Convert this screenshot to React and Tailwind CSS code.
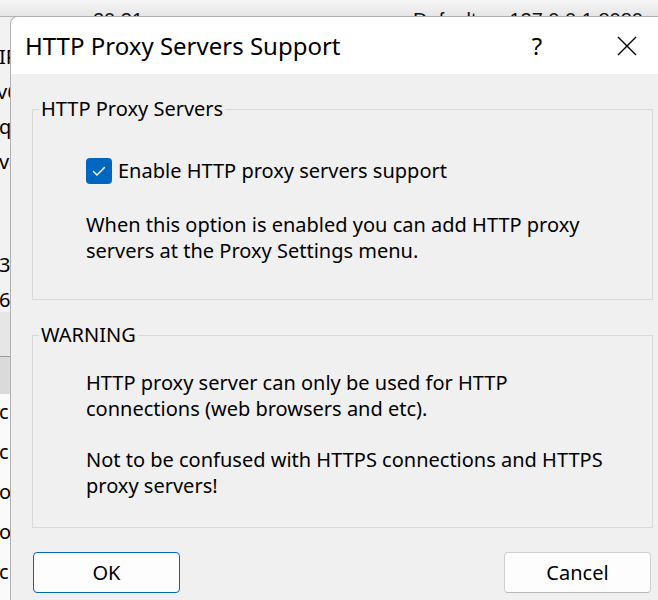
export default function App() {
  return (
    <div className="relative w-[658px] h-[600px] overflow-hidden bg-[#ececec] font-['Noto_Sans',sans-serif] text-black">
      {/* background application window */}
      <div className="absolute inset-0 flex flex-col">
        <div className="h-[17px] shrink-0 bg-gradient-to-b from-[#f6f6f6] to-[#e6e6e6] border-b border-[#b4b4b4] overflow-hidden flex items-start font-['Liberation_Sans',sans-serif] text-[20px] leading-[23px] text-[#111]">
          <span className="ml-[93px] mt-[9px]">20:31</span>
          <span className="ml-[270px] mt-[9px]">Default</span>
          <span className="ml-[33px] mt-[9px] whitespace-nowrap">127.0.0.1:8080</span>
        </div>
        <div className="w-[10px] flex-1 overflow-hidden flex flex-col text-[20px] leading-[24px] whitespace-nowrap">
          <div className="h-[303px] bg-[#f2f2f2] flex flex-col">
            <span className="mt-[28px] -ml-[1px]">IPv6</span>
            <span className="mt-[11px] -ml-[3px]">v6</span>
            <span className="mt-[11px] -ml-[1px]">q</span>
            <span className="mt-[11px] -ml-[1px]">v(</span>
            <span className="mt-[79px] -ml-[1px]">3</span>
            <span className="mt-[11px] -ml-[1px]">6</span>
          </div>
          <div className="h-[49px] bg-[#e6e6e6] border-b border-[#9a9a9a]" />
          <div className="h-[41px] bg-[#dadada]" />
          <div className="flex-1 bg-[#fafafa] flex flex-col">
            <span className="mt-[6px] -ml-[1px] h-[40px]">c</span>
            <span className="-ml-[1px] h-[40px]">c</span>
            <span className="-ml-[1px] h-[40px]">o</span>
            <span className="-ml-[1px] h-[40px]">o</span>
            <span className="-ml-[1px] h-[40px]">c</span>
          </div>
        </div>
      </div>

      {/* dialog window */}
      <div className="absolute left-[10px] top-[16px] w-[660px] h-[600px] bg-[#f0f0f0] rounded-tl-[8px] border-l border-t border-[#b0b0b0] overflow-hidden flex flex-col">
        <div className="h-[57px] shrink-0 bg-white flex items-center pl-[14px] pr-[23px]">
          <span className="text-[24px] leading-[32px] whitespace-nowrap">HTTP Proxy Servers Support</span>
          <div className="flex-1" />
          <span className="w-[40px] text-center text-[24px] leading-[32px]">?</span>
          <div className="w-[50px]" />
          <div className="w-[40px] flex items-center justify-center">
            <svg width="20" height="20" viewBox="0 0 20 20" fill="none" stroke="#000" strokeWidth="1.4">
              <path d="M1 1 L19 19 M19 1 L1 19" />
            </svg>
          </div>
        </div>

        <div className="flex flex-col pl-[21px] text-[20px] leading-[25.5px]">
          <fieldset className="mt-[22px] w-[621px] border border-[#d9d9d9] pl-[6px] pb-[36px]">
            <legend className="px-[2px] leading-[26px]">HTTP Proxy Servers</legend>
            <div className="ml-[47px] mt-[36px] flex items-center gap-[6px]">
              <span className="w-[26px] h-[26px] rounded-[4px] bg-[#0067c0] flex items-center justify-center">
                <svg width="26" height="26" viewBox="0 0 26 26" fill="none" stroke="#fff" strokeWidth="1.5" strokeLinecap="round" strokeLinejoin="round">
                  <path d="M7.5 13.5 L11 17 L18.5 9.5" />
                </svg>
              </span>
              <span>Enable HTTP proxy servers support</span>
            </div>
            <p className="ml-[47px] mt-[28px]">
              When this option is enabled you can add HTTP proxy<br />
              servers at the Proxy Settings menu.
            </p>
          </fieldset>

          <fieldset className="mt-[22px] w-[621px] border border-[#d9d9d9] pl-[6px] pb-[29px]">
            <legend className="px-[2px] leading-[26px]">WARNING</legend>
            <p className="ml-[47px] mt-[22px]">
              HTTP proxy server can only be used for HTTP<br />
              connections (web browsers and etc).
            </p>
            <p className="ml-[47px] mt-[26px]">
              Not to be confused with HTTPS connections and HTTPS<br />
              proxy servers!
            </p>
          </fieldset>

          <div className="mt-[24px] ml-[1px] w-[618px] flex justify-between">
            <button className="w-[147px] h-[41px] rounded-[4px] border border-[#0067c0] bg-[#fdfdfd] text-[20px] leading-[26px]">OK</button>
            <button className="w-[147px] h-[41px] rounded-[4px] border border-[#d0d0d0] border-b-[#b8b8b8] bg-[#fdfdfd] text-[20px] leading-[26px]">Cancel</button>
          </div>
        </div>
      </div>
    </div>
  );
}
